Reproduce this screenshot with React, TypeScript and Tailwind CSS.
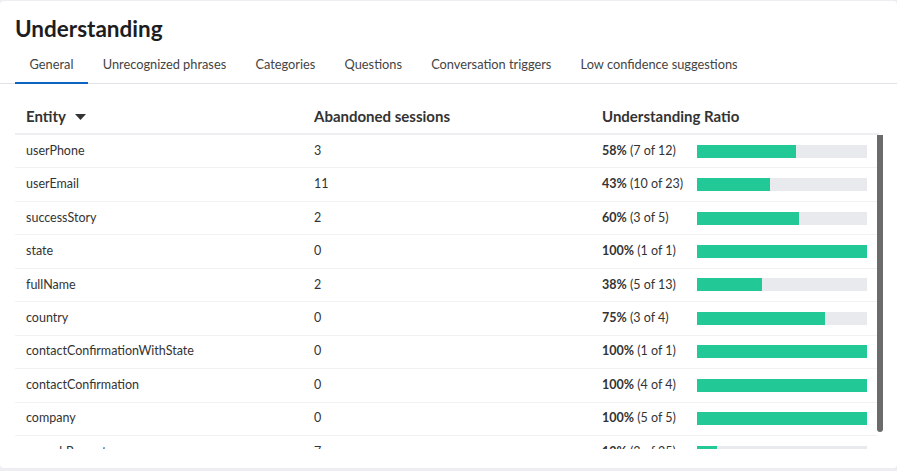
import React from "react";

const tabs = [
  "General",
  "Unrecognized phrases",
  "Categories",
  "Questions",
  "Conversation triggers",
  "Low confidence suggestions",
];

const rows = [
  { name: "userPhone", ab: 3, pct: 58, of: "(7 of 12)" },
  { name: "userEmail", ab: 11, pct: 43, of: "(10 of 23)" },
  { name: "successStory", ab: 2, pct: 60, of: "(3 of 5)" },
  { name: "state", ab: 0, pct: 100, of: "(1 of 1)" },
  { name: "fullName", ab: 2, pct: 38, of: "(5 of 13)" },
  { name: "country", ab: 0, pct: 75, of: "(3 of 4)" },
  { name: "contactConfirmationWithState", ab: 0, pct: 100, of: "(1 of 1)" },
  { name: "contactConfirmation", ab: 0, pct: 100, of: "(4 of 4)" },
  { name: "company", ab: 0, pct: 100, of: "(5 of 5)" },
  { name: "-searchPrompt", ab: 7, pct: 12, of: "(3 of 25)" },
];

export default function App() {
  return (
    <div
      className="h-[471px] w-[897px] bg-[#eceef2] pt-px pb-[3px]"
      style={{ fontFamily: "Lato, 'Open Sans', sans-serif" }}
    >
      <div className="flex h-full flex-col rounded-[4px] bg-white">
        <h1 className="pl-[15px] pt-[13px] text-[22.5px] font-bold leading-[30px] text-[#1d1d1f]">
          Understanding
        </h1>
        <div className="mt-[6px] flex border-b border-[#e1e3e6] pl-[15px]">
          {tabs.map((t, i) => (
            <div
              key={t}
              className="relative px-[14.6px] pb-[10px] pt-[6px] text-[12.8px] leading-[17px] text-[#444]"
            >
              {t}
              {i === 0 && (
                <div className="absolute bottom-[-1px] left-0 right-0 h-[2px] bg-[#0b64c0]" />
              )}
            </div>
          ))}
        </div>

        <div className="ml-[15px] mt-[16px] w-[868px]">
          <div className="flex h-[35px] w-[864px] items-center border-b-2 border-[#eceef0] text-[15px] font-bold text-[#333]">
            <div className="flex w-[288px] items-center pl-[11px]">
              Entity
              <svg width="11" height="6" viewBox="0 0 11 6" className="ml-[9px] mt-[1px]">
                <path d="M0 0h11L5.5 6z" fill="#333" />
              </svg>
            </div>
            <div className="w-[288px] pl-[11px]">Abandoned sessions</div>
            <div className="w-[288px] pl-[11px]">Understanding Ratio</div>
          </div>
          <div className="relative h-[314px] overflow-hidden">
            <div className="w-[862px]">
              {rows.map((r) => (
                <div
                  key={r.name}
                  className="flex h-[33.44px] items-center border-b border-[#f1f2f4] text-[12.5px] text-[#333]"
                >
                  <div className="w-[288px] pl-[11px]">{r.name}</div>
                  <div className="w-[288px] pl-[11px]">{r.ab}</div>
                  <div className="flex flex-1 items-center pl-[11px]">
                    <div className="w-[95px] whitespace-nowrap">
                      <span className="font-bold">{r.pct}%</span> {r.of}
                    </div>
                    <div className="h-[13px] w-[170px] bg-[#e8eaed]">
                      <div className="h-full bg-[#22c896]" style={{ width: `${r.pct}%` }} />
                    </div>
                  </div>
                </div>
              ))}
            </div>
            <div className="absolute left-[862px] top-0 h-[297px] w-[6px] rounded-b-[3px] bg-[#6b6b6b]" />
          </div>
        </div>
      </div>
    </div>
  );
}
